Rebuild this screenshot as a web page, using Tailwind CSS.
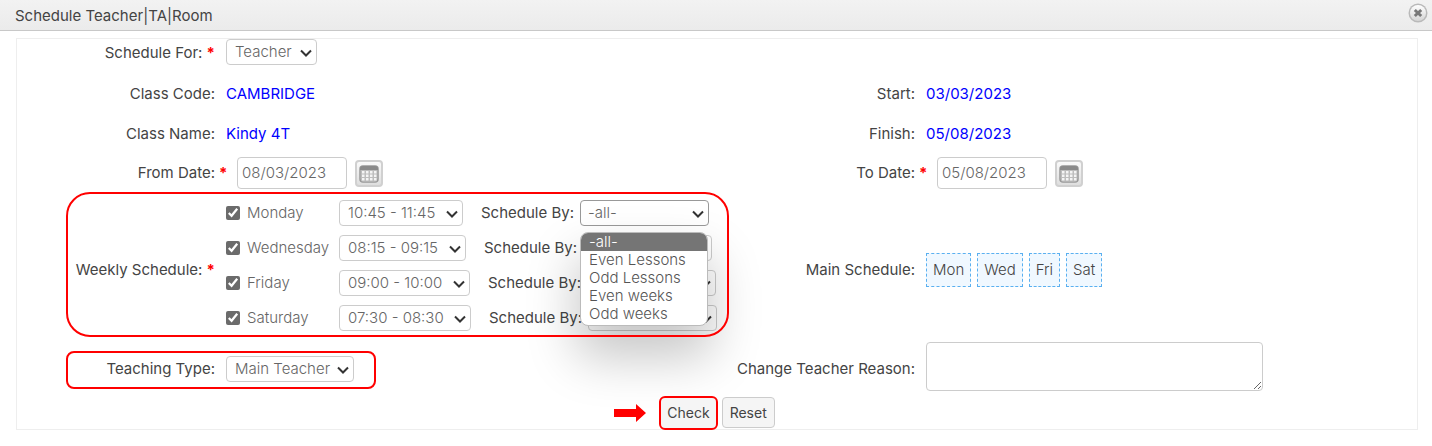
<!DOCTYPE html>
<html lang="en">
<head>
<meta charset="utf-8">
<title>Schedule Teacher|TA|Room</title>
<script src="https://cdn.jsdelivr.net/npm/@tailwindcss/browser@4"></script>
</head>
<body class="bg-white font-['Inter','Liberation_Sans',sans-serif] text-[15px] leading-5 text-[#444]">
<svg class="hidden">
  <symbol id="chevron" viewBox="0 0 12 8"><path d="M1 1.500l5 5 5-5" fill="none" stroke="#333" stroke-width="2"/></symbol>
  <symbol id="calendar" viewBox="0 0 20 18">
    <rect x="1" y="1" width="18" height="16" rx="3" fill="#ddd" stroke="#999" stroke-width="1.500"/>
    <path d="M1 5V4q0-3 3-3h12q3 0 3 3v1z" fill="#8a8a8a"/>
    <path d="M2 5h16v10q0 1.500-1.500 1.500h-13Q2 16.500 2 15z" fill="#bdbdbd"/>
    <path d="M3 6h2.500v2.500H3zM7 6h2.500v2.500H7zM11 6h2.500v2.500H11zM15 6h2.500v2.500H15zM3 9.500h2.500V12H3zM7 9.500h2.500V12H7zM11 9.500h2.500V12H11zM15 9.500h2.500V12H15zM3 13h2.500v2.500H3zM7 13h2.500v2.500H7zM11 13h2.500v2.500H11zM15 13h2.500v2.500H15z" fill="#f4f4f4"/>
  </symbol>
</svg>
<header class="flex h-[31px] items-center justify-between border-b border-[#c8c8c8] bg-linear-to-b from-[#f2f2f2] to-[#ebebeb] pt-0.5 pr-1 pl-[15px]">
  <h1>Schedule Teacher|TA|Room</h1>
  <button type="button" aria-label="Close" class="-mt-1.5">
    <svg width="20" height="20" viewBox="0 0 20 20">
      <defs><linearGradient id="cg" x1="0" y1="0" x2="0" y2="1"><stop offset="0" stop-color="#fff"/><stop offset="1" stop-color="#d4d4d4"/></linearGradient></defs>
      <circle cx="10" cy="10" r="9.500" fill="#b9b9b9"/><circle cx="10" cy="10" r="8" fill="url(#cg)"/>
      <path d="M6.800 7l6.400 6M13.200 7l-6.400 6" stroke="#777" stroke-width="3"/>
    </svg>
  </button>
</header>

<main class="mt-[7px] mr-[14px] ml-4">
<form class="border border-[#eee]">
  <div class="grid h-[35px] grid-cols-2">
    <div class="grid grid-cols-[198px_1fr] items-start gap-x-[11px]">
      <label for="for" class="pt-1 text-right">Schedule For: <span class="font-bold text-[#f00]">*</span></label>
      <div><span class="relative inline-flex"><select id="for" class="h-[26px] appearance-none rounded border border-[#ccc] pr-6 pl-2 font-light text-[#666]"><option>Teacher</option></select><svg class="pointer-events-none absolute top-[10px] right-[5px] h-2 w-3"><use href="#chevron"/></svg></span></div>
    </div>
  </div>

  <div class="grid h-10 grid-cols-2">
    <div class="grid grid-cols-[198px_1fr] items-center gap-x-[11px]"><span class="text-right">Class Code:</span><span class="text-[#00f]">CAMBRIDGE</span></div>
    <div class="grid grid-cols-[198px_1fr] items-center gap-x-[11px]"><span class="text-right">Start:</span><span class="text-[#00f]">03/03/2023</span></div>
  </div>
  <div class="grid h-[39px] grid-cols-2">
    <div class="grid grid-cols-[198px_1fr] items-center gap-x-[11px]"><span class="text-right">Class Name:</span><span class="text-[#00f]">Kindy 4T</span></div>
    <div class="grid grid-cols-[198px_1fr] items-center gap-x-[11px]"><span class="text-right">Finish:</span><span class="text-[#00f]">05/08/2023</span></div>
  </div>
  <div class="grid h-[39px] grid-cols-2">
    <div class="grid grid-cols-[198px_1fr] items-center gap-x-1">
      <label for="from" class="text-right">From Date:</label>
      <div class="flex items-center"><span class="w-[18px] font-bold text-[#f00]">*</span>
        <input id="from" type="text" value="08/03/2023" class="mr-2 h-8 w-[110px] rounded border border-[#ccc] px-1 font-light text-[#666]">
        <button type="button" aria-label="Pick from date" class="mt-0.5 flex h-[27px] w-7 items-center justify-center rounded border-2 border-[#d0d0d0] bg-linear-to-b from-[#fafafa] to-[#dedede]">
          <svg class="h-[18px] w-5"><use href="#calendar"/></svg>
        </button>
      </div>
    </div>
    <div class="grid grid-cols-[198px_1fr] items-center gap-x-1">
      <label for="to" class="text-right">To Date:</label>
      <div class="flex items-center"><span class="w-[18px] font-bold text-[#f00]">*</span>
        <input id="to" type="text" value="05/08/2023" class="mr-2 h-8 w-[110px] rounded border border-[#ccc] px-1 font-light text-[#666]">
        <button type="button" aria-label="Pick to date" class="mt-0.5 flex h-[27px] w-7 items-center justify-center rounded border-2 border-[#d0d0d0] bg-linear-to-b from-[#fafafa] to-[#dedede]">
          <svg class="h-[18px] w-5"><use href="#calendar"/></svg>
        </button>
      </div>
    </div>
  </div>

  <div class="relative grid h-[145px] grid-cols-2">
    <div class="pointer-events-none absolute inset-y-0 left-[49px] z-20 w-[663px] rounded-3xl border-2 border-[#f00]"></div>
    <div class="grid grid-cols-[198px_1fr] gap-x-[11px]">
      <span class="self-center pt-2.5 text-right">Weekly Schedule: <span class="font-bold text-[#f00]">*</span></span>
      <div class="flex flex-col gap-[9px] pt-2 font-light text-[#666]">
        <div class="flex h-[26px] items-center whitespace-nowrap">
          <label class="flex w-[113px] items-center gap-[7px]"><input type="checkbox" checked class="size-[14px] accent-[#6b6b6b]">Monday</label>
          <span class="relative inline-flex"><select aria-label="Monday time" class="h-[26px] appearance-none rounded border border-[#ccc] pr-[26px] pl-2"><option>10:45 - 11:45</option></select><svg class="pointer-events-none absolute top-[10px] right-[5px] h-2 w-3"><use href="#chevron"/></svg></span>
          <label for="by1" class="mr-1.5 ml-[18px] font-normal text-[#444]">Schedule By:</label>
          <div class="relative">
            <span class="relative flex"><select id="by1" class="h-[26px] w-[129px] appearance-none rounded border border-[#999] pl-[7px]"><option>-all-</option></select><svg class="pointer-events-none absolute top-[10px] right-[5px] h-2 w-3"><use href="#chevron"/></svg></span>
            <ul role="listbox" aria-label="Schedule by" class="absolute top-8 left-0 z-10 w-32 overflow-hidden rounded-lg border border-[#bbb] bg-white pb-0.5 leading-[18px] text-[#555] shadow-[0_28px_50px_4px_rgba(0,0,0,0.22)]">
              <li role="option" aria-selected="true" class="bg-[#757575] px-2 text-white">-all-</li>
              <li role="option" class="px-2">Even Lessons</li>
              <li role="option" class="px-2">Odd Lessons</li>
              <li role="option" class="px-2">Even weeks</li>
              <li role="option" class="px-2">Odd weeks</li>
            </ul>
          </div>
        </div>
        <div class="flex h-[26px] items-center whitespace-nowrap">
          <label class="flex w-[113px] items-center gap-[7px]"><input type="checkbox" checked class="size-[14px] accent-[#6b6b6b]">Wednesday</label>
          <span class="relative inline-flex"><select aria-label="Wednesday time" class="h-[26px] appearance-none rounded border border-[#ccc] pr-[26px] pl-2"><option>08:15 - 09:15</option></select><svg class="pointer-events-none absolute top-[10px] right-[5px] h-2 w-3"><use href="#chevron"/></svg></span>
          <label for="by2" class="mr-1.5 ml-[18px] font-normal text-[#444]">Schedule By:</label>
          <span class="relative flex"><select id="by2" class="h-[26px] w-[129px] appearance-none rounded border border-[#ccc] pl-[7px]"><option>-all-</option></select><svg class="pointer-events-none absolute top-[10px] right-[5px] h-2 w-3"><use href="#chevron"/></svg></span>
        </div>
        <div class="flex h-[26px] items-center whitespace-nowrap">
          <label class="flex w-[113px] items-center gap-[7px]"><input type="checkbox" checked class="size-[14px] accent-[#6b6b6b]">Friday</label>
          <span class="relative inline-flex"><select aria-label="Friday time" class="h-[26px] appearance-none rounded border border-[#ccc] pr-[26px] pl-2"><option>09:00 - 10:00</option></select><svg class="pointer-events-none absolute top-[10px] right-[5px] h-2 w-3"><use href="#chevron"/></svg></span>
          <label for="by3" class="mr-1.5 ml-[18px] font-normal text-[#444]">Schedule By:</label>
          <span class="relative flex"><select id="by3" class="h-[26px] w-[129px] appearance-none rounded border border-[#ccc] pl-[7px]"><option>-all-</option></select><svg class="pointer-events-none absolute top-[10px] right-[5px] h-2 w-3"><use href="#chevron"/></svg></span>
        </div>
        <div class="flex h-[26px] items-center whitespace-nowrap">
          <label class="flex w-[113px] items-center gap-[7px]"><input type="checkbox" checked class="size-[14px] accent-[#6b6b6b]">Saturday</label>
          <span class="relative inline-flex"><select aria-label="Saturday time" class="h-[26px] appearance-none rounded border border-[#ccc] pr-[26px] pl-2"><option>07:30 - 08:30</option></select><svg class="pointer-events-none absolute top-[10px] right-[5px] h-2 w-3"><use href="#chevron"/></svg></span>
          <label for="by4" class="mr-1.5 ml-[18px] font-normal text-[#444]">Schedule By:</label>
          <span class="relative flex"><select id="by4" class="h-[26px] w-[129px] appearance-none rounded border border-[#ccc] pl-[7px]"><option>-all-</option></select><svg class="pointer-events-none absolute top-[10px] right-[5px] h-2 w-3"><use href="#chevron"/></svg></span>
        </div>
      </div>
    </div>
    <div class="grid grid-cols-[198px_1fr] items-center gap-x-[11px] pt-2.5">
      <span class="text-right">Main Schedule:</span>
      <div class="flex gap-1.5 font-light text-[#444]">
        <span class="border border-dashed border-[#5ab0f0] bg-[#f0f8ff] px-1.5 py-1.5">Mon</span>
        <span class="border border-dashed border-[#5ab0f0] bg-[#f0f8ff] px-1.5 py-1.5">Wed</span>
        <span class="border border-dashed border-[#5ab0f0] bg-[#f0f8ff] px-1.5 py-1.5">Fri</span>
        <span class="border border-dashed border-[#5ab0f0] bg-[#f0f8ff] px-1.5 py-1.5">Sat</span>
      </div>
    </div>
  </div>

  <div class="relative grid h-[59px] grid-cols-2">
    <div class="pointer-events-none absolute top-[14px] left-[49px] h-[38px] w-[310px] rounded-lg border-2 border-[#f00]"></div>
    <div class="grid grid-cols-[198px_1fr] items-center gap-x-[11px] pt-1">
      <label for="type" class="text-right">Teaching Type:</label>
      <div class="flex"><span class="relative inline-flex"><select id="type" class="h-[26px] appearance-none rounded border border-[#ccc] pr-[22px] pl-2 font-light text-[#666]"><option>Main Teacher</option></select><svg class="pointer-events-none absolute top-[10px] right-[5px] h-2 w-3"><use href="#chevron"/></svg></span></div>
    </div>
    <div class="grid grid-cols-[198px_1fr] gap-x-[11px]">
      <label for="reason" class="self-center pt-1 text-right">Change Teacher Reason:</label>
      <div class="pt-[5px]"><textarea id="reason" class="block h-[49px] w-[337px] rounded border border-[#ccc]"></textarea></div>
    </div>
  </div>

  <div class="relative z-20 flex h-[33px] items-center justify-center gap-1 pr-[46px] text-sm">
    <svg class="mr-2" width="34" height="20" viewBox="0 0 34 20"><path d="M1 6h22V1l10 9-10 9v-5H1z" fill="#f00"/></svg>
    <button type="button" class="h-[34px] rounded-md border-2 border-[#f00] bg-[#f5f5f5] px-1.5">Check</button>
    <button type="reset" class="h-[31px] rounded-sm border border-[#ccc] bg-[#f5f5f5] px-[7px]">Reset</button>
  </div>
</form>
</main>
</body>
</html>
